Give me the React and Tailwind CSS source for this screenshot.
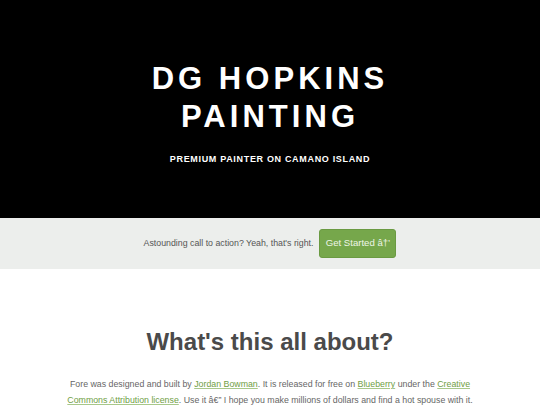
export default function App() {
  const font = { fontFamily: '"Liberation Sans", Arial, sans-serif' };
  return (
    <div className="w-[540px] bg-white" style={font}>
      <header className="h-[218px] bg-black flex flex-col items-center justify-center text-white">
        <h1 className="text-[31px] leading-[38px] font-bold tracking-[0.13em] text-center mt-[8px]">
          DG HOPKINS
          <br />
          PAINTING
        </h1>
        <p className="mt-[17px] text-[9px] font-bold tracking-[0.075em] uppercase">Premium Painter on Camano Island</p>
      </header>
      <section className="h-[51px] bg-[#eceeec] flex items-center justify-center gap-[6px]">
        <span className="text-[8.8px] text-[#555]">Astounding call to action? Yeah, that's right.</span>
        <a className="h-[29px] w-[77px] rounded-[3px] bg-[#76a74b] border border-[#6a9a42] flex items-center justify-center text-[9.6px] text-[#eef5e6]">
          Get Started â†’
        </a>
      </section>
      <section className="flex flex-col items-center pt-[59px]">
        <h2 className="text-[24px] font-bold text-[#4a4a4a] leading-[28px]">What's this all about?</h2>
        <p className="mt-[20px] w-[420px] text-center text-[8.8px] leading-[16px] text-[#666]">
          Fore was designed and built by <a className="text-[#6f9e44] underline decoration-[#a8c88a]">Jordan Bowman</a>. It is released for free on{" "}
          <a className="text-[#6f9e44] underline decoration-[#a8c88a]">Blueberry</a> under the{" "}
          <a className="text-[#6f9e44] underline decoration-[#a8c88a]">Creative Commons Attribution license</a>. Use it â€” I hope you make millions of dollars and find a hot spouse with it.
        </p>
      </section>
    </div>
  );
}
